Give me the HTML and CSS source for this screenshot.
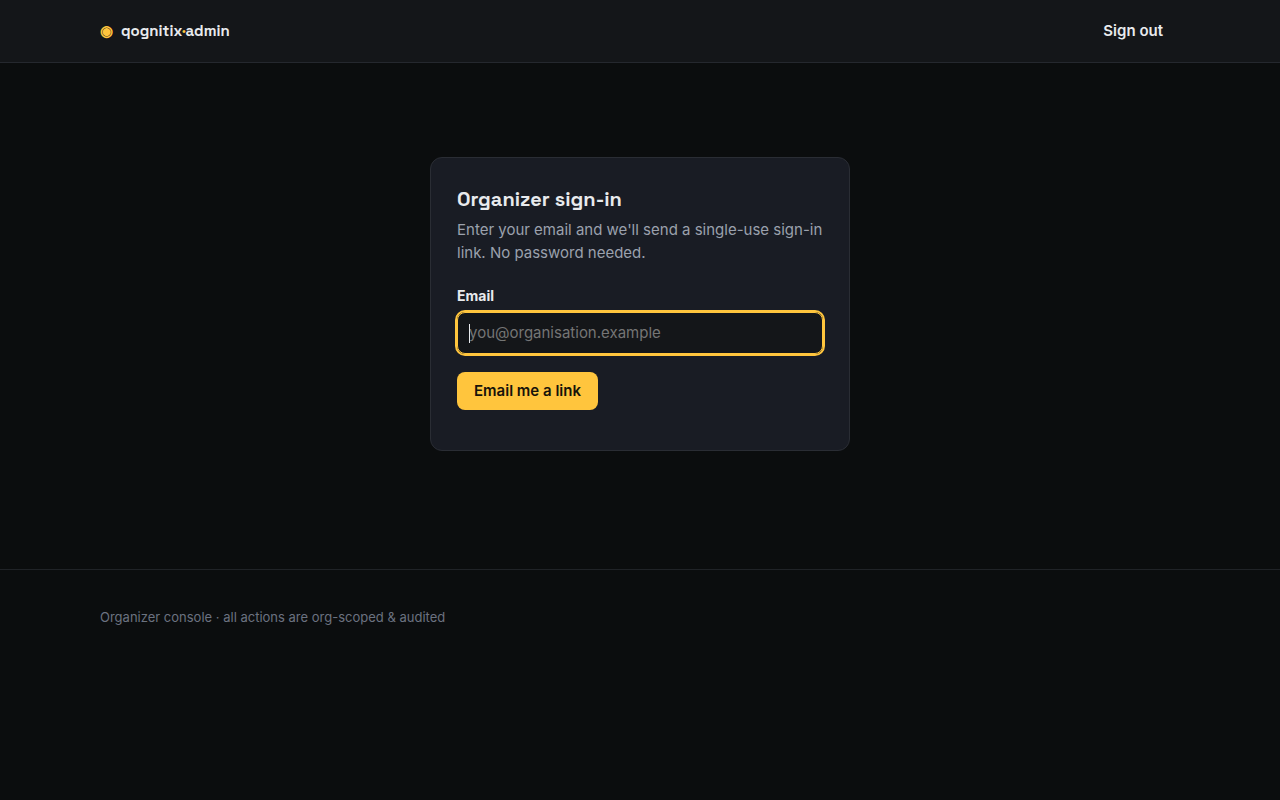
FILE: index.html
```html
<!DOCTYPE html>
<html lang="en">
<head>
<meta charset="utf-8">
<meta name="viewport" content="width=device-width, initial-scale=1">
<title>Organizer sign-in</title>
<link rel="stylesheet" href="styles.css">
</head>
<body>
<header class="site-header">
  <div class="wrap header-row">
    <a class="brand" href="#"><span class="brand-mark" aria-hidden="true">◉</span><span>qognitix<span class="dot">·</span>admin</span></a>
    <button class="btn btn-ghost" type="button">Sign out</button>
  </div>
</header>
<main class="wrap main">
  <section class="card">
    <h1 class="title">Organizer sign-in</h1>
    <p class="lead">Enter your email and we'll send a single-use sign-in link. No password needed.</p>
    <form class="form">
      <label class="label" for="email">Email</label>
      <div class="field">
        <input class="input" id="email" type="email" placeholder="you@organisation.example" autofocus>
        <span class="caret" aria-hidden="true"></span>
      </div>
      <button class="btn btn-primary" type="submit">Email me a link</button>
    </form>
  </section>
</main>
<footer class="site-footer">
  <div class="wrap">Organizer console · all actions are org-scoped &amp; audited</div>
</footer>
</body>
</html>
```
FILE: styles.css
```css
* { box-sizing: border-box; }
body {
  margin: 0;
  background: #0b0d0e;
  color: #e8eaed;
  font: 15px/23px "Inter Variable", Inter, "Liberation Sans", sans-serif;
  font-optical-sizing: none;
}
.wrap { max-width: 1120px; margin: 0 auto; padding: 0 20px; }
.site-header { background: #141619; border-bottom: 1px solid #25282e; }
.header-row { display: flex; align-items: center; justify-content: space-between; padding-top: 12px; padding-bottom: 12px; }
.brand { display: flex; align-items: center; gap: 8px; color: inherit; font-family: "Space Grotesk", Inter, sans-serif; font-weight: 600; line-height: 22px; text-decoration: none; }
.brand-mark, .dot { color: #ffc53d; }
.btn { border: 0; border-radius: 8px; padding: 8px 17px; font: inherit; font-weight: 600; line-height: 22px; color: inherit; cursor: pointer; }
.btn-ghost { background: none; }
.btn-primary { background: #ffc53d; color: #17130a; }
.main { padding-top: 94px; padding-bottom: 118px; }
.card { max-width: 420px; margin: 0 auto; padding: 26px; background: #191c24; border: 1px solid #2a2d34; border-radius: 12px; }
.title { margin: 0 0 4px; font-family: "Space Grotesk", Inter, sans-serif; font-size: 20px; line-height: 30px; font-weight: 600; }
.lead { margin: 0 0 20px; color: #9ba1ad; }
.form { display: flex; flex-direction: column; align-items: flex-start; padding-bottom: 14px; }
.label { font-size: 14px; font-weight: 700; margin-bottom: 5px; }
.field { position: relative; width: 100%; margin-bottom: 18px; }
.input { display: block; width: 100%; height: 42px; padding: 0 11px 1px; border: 1px solid #2a2d34; border-radius: 8px; background: #141619; color: inherit; font: inherit; caret-color: transparent; }
.input::placeholder { color: #757575; }
.input:focus { border-color: #ffc53d; outline: 2px solid #ffc53d; }
/* Solid text caret, shown only while the empty field has focus */
.caret { display: none; position: absolute; left: 12px; top: 12px; width: 1px; height: 19px; background: #e8eaed; pointer-events: none; }
.input:focus:placeholder-shown + .caret { display: block; }
.site-footer { border-top: 1px solid #202327; padding: 36px 0; color: #6b7280; font-size: 13px; }
```
